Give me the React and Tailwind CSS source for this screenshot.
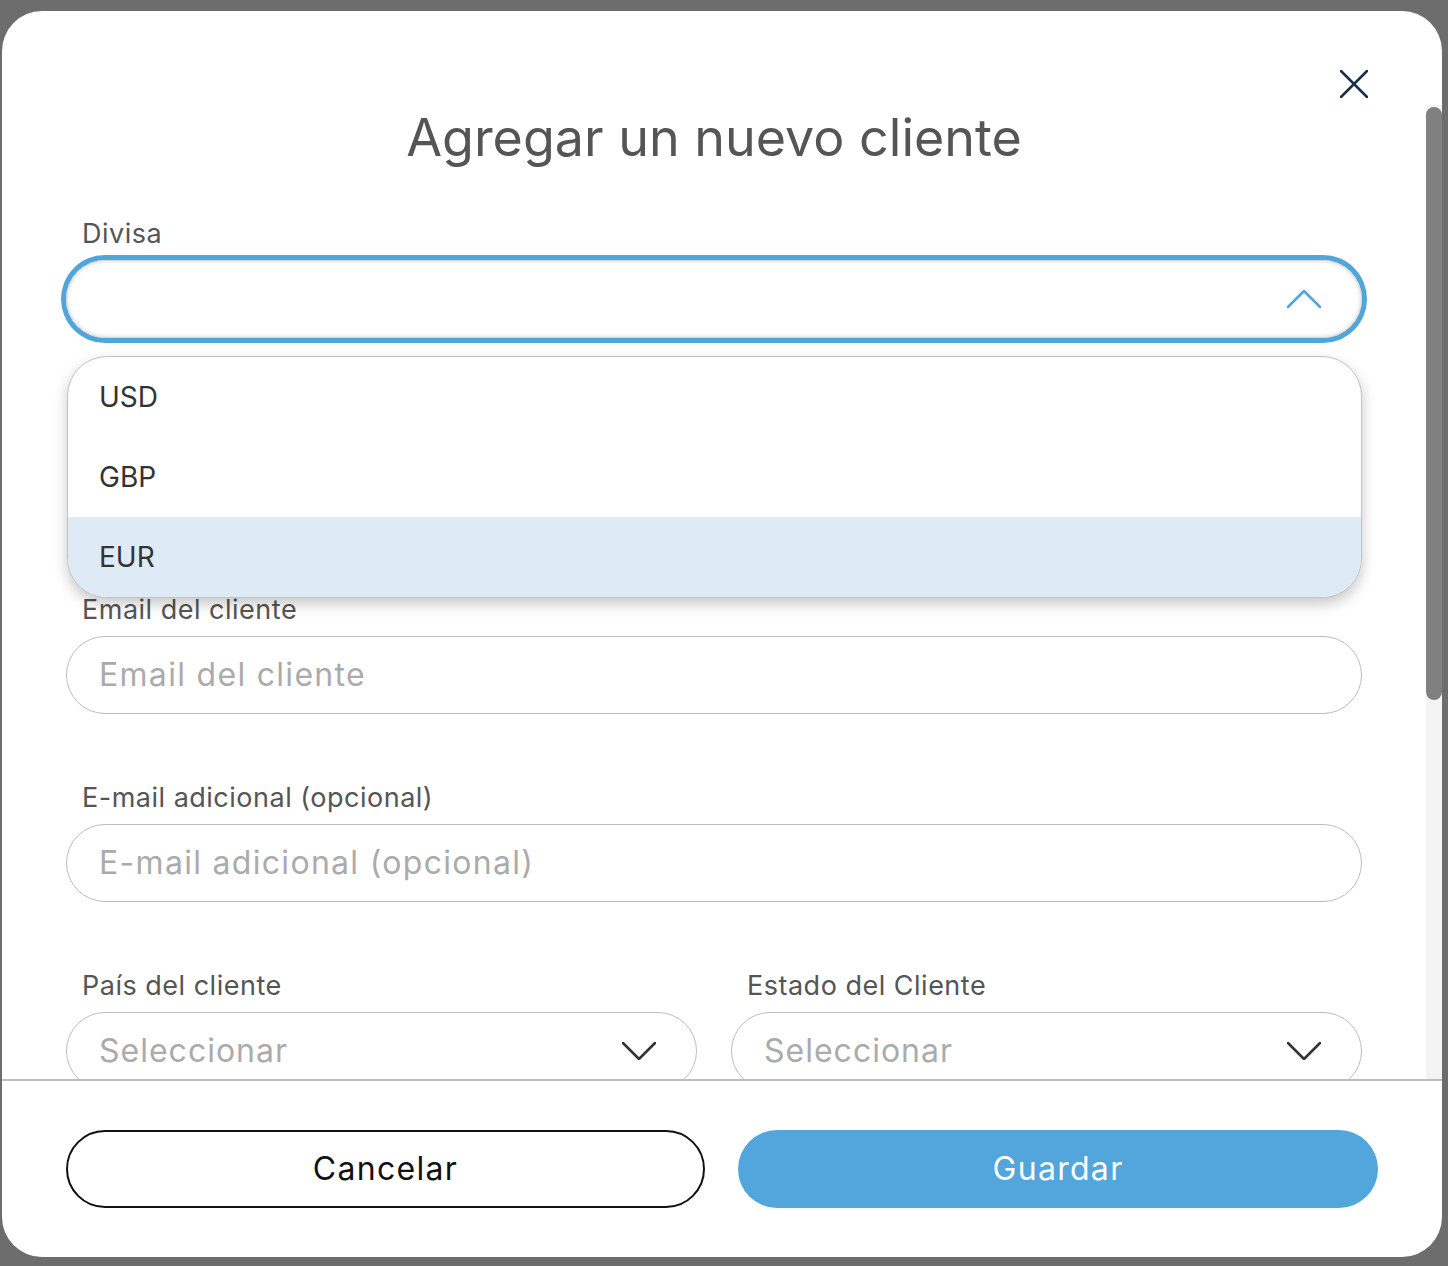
import React from 'react';

const font = { fontFamily: 'Inter, "Noto Sans", sans-serif' };

const Chevron = ({ up, className }) => (
  <svg width="34" height="18" viewBox="0 0 34 18" fill="none" className={className}>
    <polyline
      points={up ? '1,17 17,1 33,17' : '1,1 17,17 33,1'}
      stroke="currentColor"
      strokeWidth="2.5"
      strokeLinecap="round"
      strokeLinejoin="round"
    />
  </svg>
);

const Label = ({ children }) => (
  <label className="block px-4 mb-[11px] text-[27px] leading-[30px] tracking-[0.5px] text-[#555]">{children}</label>
);

const TextInput = ({ placeholder }) => (
  <div className="h-[78px] rounded-full border-[1.5px] border-[#bdbdbd] flex items-center pl-[32px]">
    <span className="text-[32px] tracking-[1.3px] text-[#ababab]">{placeholder}</span>
  </div>
);

const SelectBox = ({ placeholder }) => (
  <div className="h-[78px] rounded-full border-[1.5px] border-[#bdbdbd] flex items-center justify-between pl-[32px] pr-[40px]">
    <span className="text-[32px] tracking-[1px] text-[#ababab]">{placeholder}</span>
    <Chevron className="text-[#333]" />
  </div>
);

const currencies = ['USD', 'GBP', 'EUR'];

export default function App() {
  return (
    <div className="min-h-[1266px] bg-[#6d6d6d] pt-[11px] pl-[2px]" style={font}>
      {/* Modal */}
      <div className="w-[1440px] h-[1246px] bg-white rounded-[40px] flex flex-col overflow-hidden">
        {/* Header with close */}
        <div className="h-[94px] flex justify-end items-start pt-[59px] pr-[74px]">
          <button className="text-[#1b2f4b]">
            <svg width="28" height="28" viewBox="0 0 28 28" fill="none">
              <path d="M1 1L27 27M27 1L1 27" stroke="currentColor" strokeWidth="2.5" strokeLinecap="round" />
            </svg>
          </button>
        </div>

        <div className="flex-1 flex overflow-hidden">
          <div className="flex-1 px-16">
            <h2 className="mt-[2px] text-center text-[52px] leading-[62px] text-[#555]">
              Agregar un nuevo cliente
            </h2>

            {/* Divisa (open) */}
            <div className="mt-[50px]">
              <Label>Divisa</Label>
              <div className="relative">
                <div className="h-[78px] rounded-full border border-[#d6d6d6] shadow-[0_0_0_5px_#50a5db,inset_0_0_4px_rgba(0,0,0,0.18)] flex items-center justify-end pr-[40px]">
                  <Chevron up className="text-[#50a5db]" />
                </div>
                {/* Options menu */}
                <div className="absolute z-10 top-full mt-[18px] left-[1px] right-0 rounded-[40px] border border-[#c2c2c2] bg-white overflow-hidden shadow-[0_6px_14px_rgba(0,0,0,0.22)]">
                  {currencies.map((c) => (
                    <div
                      key={c}
                      className={`h-[80px] flex items-center pl-[31px] text-[28px] text-[#333] ${c === 'EUR' ? 'bg-[#deebf7]' : ''}`}
                    >
                      {c}
                    </div>
                  ))}
                </div>
              </div>
            </div>

            {/* space taken by the field under the open menu */}
            <div className="mt-[69px] h-[119px]" />

            <div className="mt-[69px]">
              <Label>Email del cliente</Label>
              <TextInput placeholder="Email del cliente" />
            </div>

            <div className="mt-[69px]">
              <Label>E-mail adicional (opcional)</Label>
              <TextInput placeholder="E-mail adicional (opcional)" />
            </div>

            <div className="mt-[69px] grid grid-cols-2 gap-[34px]">
              <div>
                <Label>País del cliente</Label>
                <SelectBox placeholder="Seleccionar" />
              </div>
              <div>
                <Label>Estado del Cliente</Label>
                <SelectBox placeholder="Seleccionar" />
              </div>
            </div>
          </div>

          {/* Scrollbar */}
          <div className="w-4 bg-[#f4f4f4] pt-[2px]">
            <div className="h-[593px] rounded-full bg-[#808080]" />
          </div>
        </div>

        {/* Footer */}
        <div className="border-t-2 border-[#bdbdbd] py-[49px] pl-16 pr-[64px] flex gap-[33px]">
          <button className="w-[639px] h-[78px] rounded-full border-2 border-[#111] text-[32px] tracking-[1.3px] text-[#111]">
            Cancelar
          </button>
          <button className="w-[640px] h-[78px] rounded-full bg-[#52a6db] text-[32px] tracking-[1.3px] text-white">
            Guardar
          </button>
        </div>
      </div>
    </div>
  );
}
